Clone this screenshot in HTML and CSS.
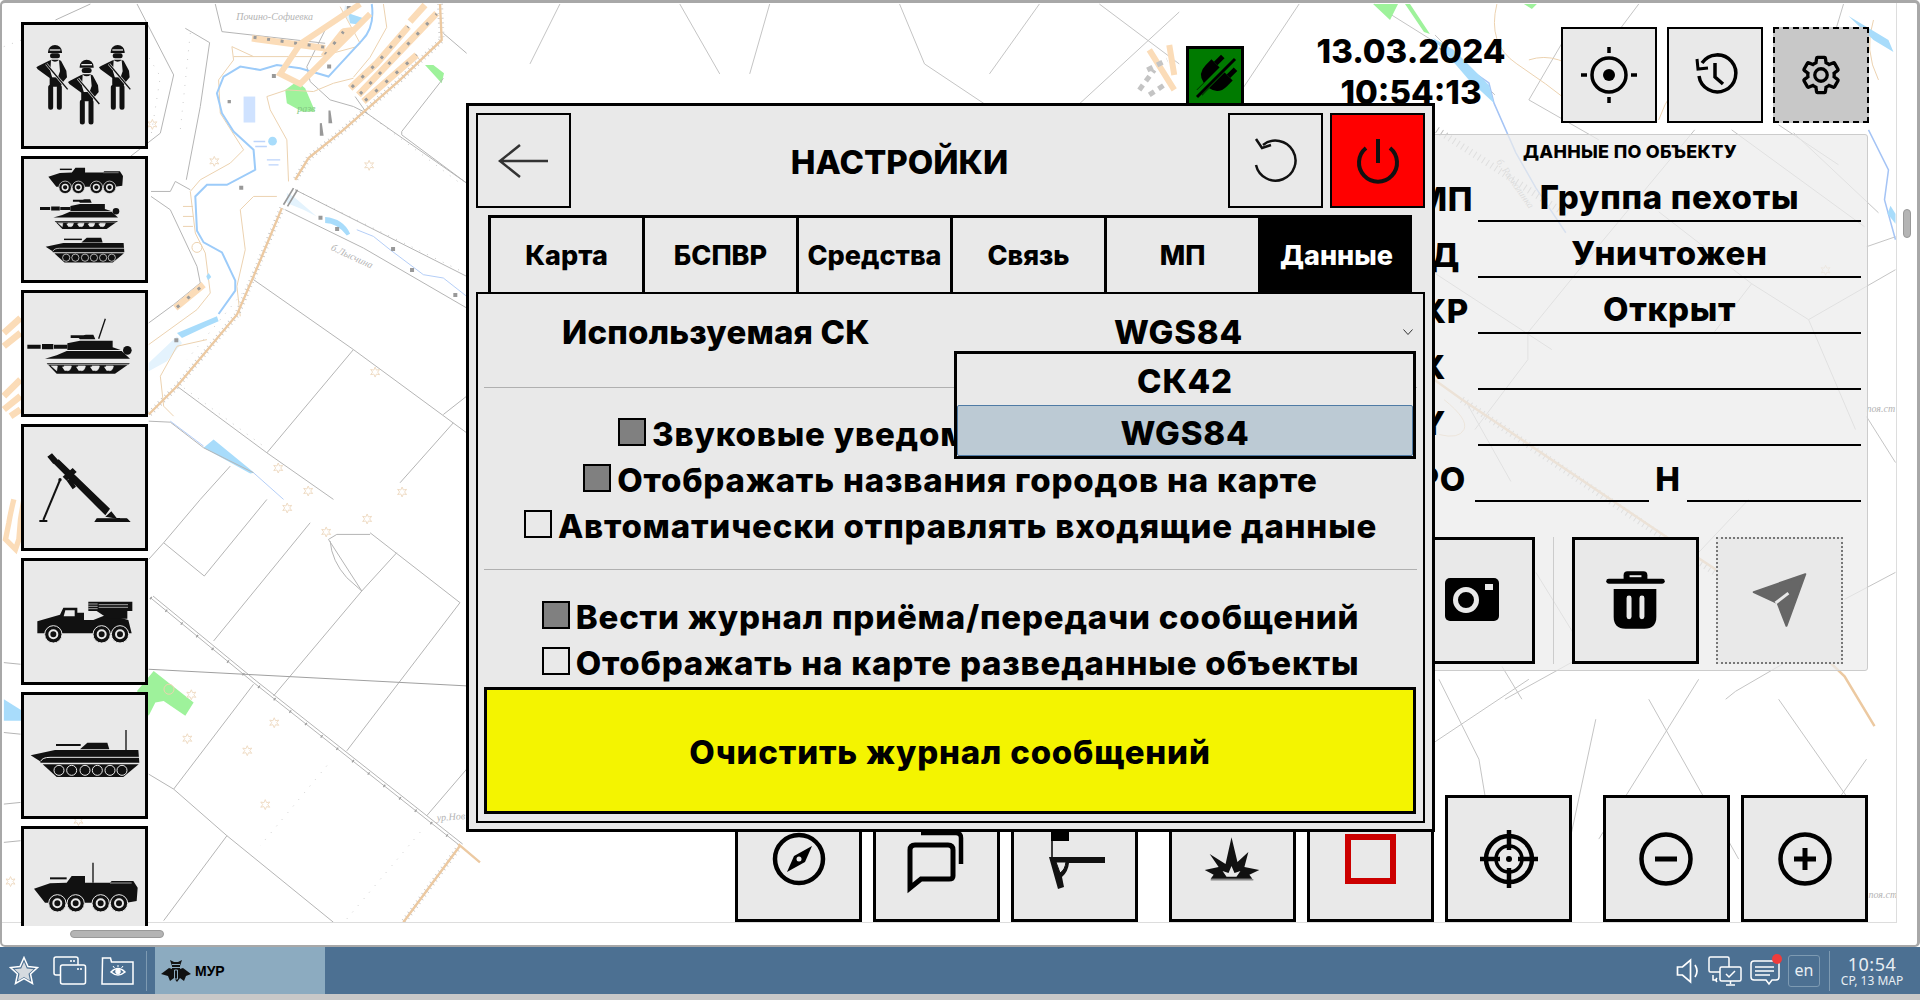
FILE: index.html
```html
<!doctype html>
<html lang="ru">

<head>
  <meta charset="UTF-8" />
  <title>МУР</title>
  <link rel="stylesheet" href="styles.css">
</head>

<body>
  <svg class="defs" width="0" height="0">
    <defs>
      <g id="soldier">
        <path d="M-21 20a21 21 0 0 1 42 0v3h-42z" fill="#111" />
        <path d="M-16 12h32v4h-32z" fill="#e9e9e9" />
        <rect x="-15" y="24" width="30" height="15" rx="7" fill="#111" />
        <path d="M-18 46l8-3h20l8 3 16 30 2 20-12 14-8 14h-32v-26l-36-26-4-6 6-4z" fill="#111" />
        <path d="M-12 44q12 10 24 0l3 34-7 20h-16l-6-20z" fill="#e9e9e9" />
        <path d="M-15 96h30v22h-30z" fill="#111" />
        <path d="M-26 56l64 76" stroke="#e9e9e9" stroke-width="8" />
        <path d="M-26 56l64 76" stroke="#111" stroke-width="4" />
        <path d="M-13 126v60M13 126v60" stroke="#111" stroke-width="15" stroke-linecap="round" />
      </g>
      <g id="tank">
        <path d="M82 1036h40v12h-40zM126 1034h34v16h-34zM162 1036h40v12h-40z" fill="#111" />
        <path d="M202 1032l38-8h98v20l24 8h-160z" fill="#111" />
        <path d="M212 1008h38l8-2h22l6 14h-46l-4-4h-24z" fill="#111" />
        <circle cx="382" cy="1053" r="13" fill="#111" />
        <path d="M135 1078l35-10 30-13h165l25 23z" fill="#111" />
        <path d="M140 1092h250l-45 31h-175z" fill="#111" />
        <path d="M144 1096h240M172 1100h-18l16 14zM214 1100h-22q2 14 11 14t11-14zM256 1100h-22q2 14 11 14t11-14zM298 1100h-22q2 14 11 14t11-14zM340 1100h-22q2 14 11 14t11-14z" fill="#e9e9e9" stroke="#e9e9e9" stroke-width="2" />
        <path d="M186 1102l8 12h4l8-12zM228 1102l8 12h4l8-12zM270 1102l8 12h4l8-12zM312 1102l8 12h4l8-12z" fill="#e9e9e9" />
      </g>
      <g id="bmp">
        <path d="M168 734h74v6h-74z" fill="#111" />
        <path d="M240 750l22-20h60l6 20z" fill="#111" />
        <path d="M92 768l73-16h250l3 38h-296l-3-5z" fill="#111" />
        <path d="M122 786q5-12 28-12h268" fill="none" stroke="#e9e9e9" stroke-width="3" />
        <path d="M128 795h288l-46 38h-200z" fill="#111" />
        <g fill="#111" stroke="#e9e9e9" stroke-width="3">
          <circle cx="177" cy="813" r="15" /><circle cx="215" cy="813" r="15" /><circle cx="255" cy="813" r="15" />
          <circle cx="292" cy="813" r="15" /><circle cx="330" cy="813" r="15" /><circle cx="366" cy="813" r="15" />
        </g>
      </g>
      <g id="btr">
        <path d="M150 1134h50v6h-50z" fill="#111" />
        <path d="M102 1168l48-16 50-2 15-20h40v20h75l5-5h65l13 20-3 40-30 5h-245z" fill="#111" />
        <path d="M330 1151h65" stroke="#e9e9e9" stroke-width="2" />
        <g fill="#111" stroke="#e9e9e9" stroke-width="3">
          <circle cx="172" cy="1212" r="26" /><circle cx="227" cy="1212" r="26" /><circle cx="302" cy="1212" r="26" /><circle cx="357" cy="1212" r="26" />
        </g>
        <g fill="none" stroke="#e9e9e9" stroke-width="6">
          <circle cx="172" cy="1212" r="12" /><circle cx="227" cy="1212" r="12" /><circle cx="302" cy="1212" r="12" /><circle cx="357" cy="1212" r="12" />
        </g>
      </g>
      <path id="star" d="M0-4.500l1.300 3 3.200-.6-2 2.600 2 2.600-3.200-.6-1.300 3-1.300-3-3.200.6 2-2.600-2-2.600 3.200.6z" fill="none" stroke="#efdcc5" />
    </defs>
  </svg>

  <div class="screen">
    <div class="workspace">
      <svg class="map" viewBox="0 0 1897 923" width="1897" height="923">
        <g transform="scale(.3333)" fill="none">
          <path fill="#9ef29b" stroke="none" d="M855 270l35-25 25 20 30 70h-40l-45-25zM1275 195h25l32 25-7 30z" />
          <path fill="#e4f3fd" stroke="none" d="M860 580l20 10 70 60-40-20-50-20zM1035 15l20 30 35 10-5 20-35-5-20-30zM445 1090l85-80 15 20-45 55-55 30z" />
          <path fill="#a8dcfb" stroke="none" d="M975 652q55 5 75 50l-10 5q-30-37-65-37zM610 1345l30-25 122 100-12 2zM530 1000l120-50 5 15-35 15-75 35zM1045 40l45 15-5 20-35-5z" />
          <g stroke="#b5b5b5" stroke-width="3">
            <path d="M270 12l-105 48M410 12l110 213-40 175-90 70M645 12l20 83 310 35M555 85l73 43-28 192-42 220" />
            <path d="M452 575h58l15-30 45 25M452 590l58 40 80 170 10 50-80 65-75 55M885 570l515 260M855 630l235 115 310 180" />
            <path d="M1100 340l300 210M1330 235l-125 160v10l195 145M760 840l300 210 340 250M1060 1050l-260 310" />
            <path d="M530 1160l270 200 200 140M1360 1270l-160 180M445 1265l65 3 100 77 150 75M1400 1190l-70 55M690 1400l-90 100" />
            <path d="M920 200l10 45 60 55 70 20 40 20-35-50M985 70l-65 130M1330 100l70 60" />
          </g>
          <g stroke="#8f8f8f" stroke-width="2" stroke-dasharray="2 24">
            <path d="M10 140l80-30M420 130l60 100-30 190M570 100l-30 290M760 840l-200 240M885 570l500 245M1100 340l280 210M530 1150l260 190" />
          </g>
          <g stroke="#ecd2b0" stroke-width="3">
            <path d="M695 140l5 40-45 60 5 100 70 110-40 40-90 50-30 35 15 125 30 60 15 120-40 50-145 105" />
            <path d="M800 290l60-20 80 5 60-25 60-15M800 290l10 40 50 90 5 125M830 590h-70l-40 40 15 120-25 110 10 90" />
            <path d="M1020 20l60 110-10 10-110 30-260 0M620 1020l-90 20-50 90 10 90 30 30M695 140l65 30M1150 12l10 70-50 90-50 60M548 620h30M548 650h30M548 680h30" />
          </g>
          <g stroke="#fbdcb8" stroke-width="20" stroke-linejoin="bevel">
            <path d="M755 115l220 30M970 170l60-75 35-5M1050 265l80-75 95-110M1075 285l235-245M1090 305l160-140M1230 65l45-50M525 925l85-70M10 1000l50-45M10 1040l50-40M10 1190l50-50M10 1230l50-40M30 1250l30-20" />
          </g>
          <g stroke="#9a9a9a" stroke-width="9" stroke-dasharray="9 32">
            <path d="M760 112l215 30M975 165l55-70M1055 262l75-72 95-110M1080 282l230-240M1095 302l155-137M530 923l80-68" />
          </g>
          <path d="M1320 12l5 108-125 120-170 150-105 85-40 65" stroke="#bdbdbd" stroke-width="18" stroke-dasharray="2 12" />
          <path d="M845 625l-85 205-50 115-180 215-85 85" stroke="#bdbdbd" stroke-width="18" stroke-dasharray="2 12" />
          <path d="M1320 12l5 108-125 120-170 150-105 85-40 65M845 625l-85 205-50 115-180 215-85 85" stroke="#ecc9a1" stroke-width="7" />
          <path d="M850 615l30-50M862 620l30-50" stroke="#999" stroke-width="5" />
          <path d="M1115 12q10 70-30 110l-100 108-85-25-70-10-50 15-60-10-50 30-20 50 15 60 35 55 60 55 5 60-85 45h-60l-35 35 5 103 20 35 55 30 40 85v30l-50 70" stroke="#9ccbf9" stroke-width="6" />
          <path d="M1070 690l50 20 50 40 100 75 60 10 70 55M510 1265l100 75M760 1420l90 80" stroke="#a5c4f5" stroke-width="2.500" />
          <path d="M730 290h35v78h-35z" fill="#cfe2ff" />
          <circle cx="817" cy="424" r="13" fill="#a8dcfb" />
          <path d="M800 480h40M805 495h30M760 425h35M765 440h35" stroke="#bcd4fb" stroke-width="4" />
          <circle cx="590" cy="743" r="15" stroke="#ecd2b0" stroke-width="3" />
          <path d="M625 820l8 12-10 10-5-12z" fill="#a8dcfb" />
          <path fill="#999" d="M815 222h12v12h-12zM981 194h12v12h-12zM717 558h12v12h-12zM522 1016h12v12h-12zM955 648h12v12h-12zM1005 682h12v12h-12zM1173 742h12v12h-12zM1230 805h12v12h-12zM1360 880h12v12h-12zM1040 18h12v12h-12zM682 300h10v10h-10z" />
          <path fill="#999" d="M962 370l5 35h-5zM988 332l5 35h-5z" stroke="#999" stroke-width="6" />
        </g>
        <g transform="translate(0 500) scale(.3333)" fill="none">
          <path fill="#9ef29b" stroke="none" d="M410 575l50-60 120 95-25 40-65-45-25 5-20 40z" />
          <path fill="#a8dcfb" stroke="none" d="M10 600l55 35v30h-55z" />
          <g stroke="#b5b5b5" stroke-width="3">
            <path d="M600 0L490 130l122 100L800 0M930 70L640 425M985 120l100 155 105-115M1110 100l270 210-340 445M1085 275L820 590M760 555L520 870" />
            <path d="M1400 810L1280 950M445 825l75 45 160 140 320 260M680 1010L490 1265M985 120l25-15h100M990 125q5 60 50 110l45 40M445 180l45-50M10 490l50 5M10 700l50 5M10 915l50-5M10 1030l50-5" />
          </g>
          <path d="M450 295l310 255 620 490M458 290l310 255 620 490" stroke="#b5b5b5" stroke-width="3" />
          <path d="M450 295l310 255 620 490" stroke="#a0a0a0" stroke-width="9" stroke-dasharray="4 56" />
          <path d="M445 510l955 50" stroke="#a0a0a0" stroke-width="3" />
          <path d="M980 800L780 1040M1260 1000l-220 260" stroke="#8f8f8f" stroke-width="2" stroke-dasharray="2 24" />
          <path d="M1380 1040l-170 230" stroke="#bdbdbd" stroke-width="18" stroke-dasharray="2 12" />
          <path d="M1380 1040l-170 230M1375 1035l65 55" stroke="#ecc9a1" stroke-width="7" />
          <path d="M40 0q-10 40-15 70l-10 50 30 30 10-30 5-60 10-60" stroke="#fbdcb8" stroke-width="16" />
          <circle cx="506" cy="570" r="15" stroke="#ecd2b0" stroke-width="3" />
        </g>
        <g fill="none" stroke="#c4c4c4">
          <path d="M560 4l-30 60M680 4l40 70M770 4l-20 70M900 4l25 60 60 40M1040 4l-50 70M1100 4l80 60M1180 12l-100 92M1300 4l-60 90" />
          <path d="M1436 35l60 60M1375 4l80 50M1600 140l-70-40 35-60M1640 4l-60 80 40 30M1780 125l60 40M1845 4l-30 100" />
          <path d="M1696 130l-97 117-70 86v27l-53 70M1733 130l133 97M1660 212l93 72 57 36 47 110M1753 284l-37 48M1810 320l87-50M1435 273l118 77" />
          <path d="M1795 133l85 80M1868 247l29-10M1467 402l45 80M1537 573l37 60M1868 417l29 46M1750 500l-50 53M1846 600l51-27M1503 667l20 33M1573 663l-67 37M1787 663l-50 29-10 8" />
          <path d="M1530 680l-150 100M1440 680l40 80 10 60M1700 680l-100 160M1868 760l-70 100M1780 700l70 100M1597 720l-30 140M1650 700l90 160" />
        </g>
        <g fill="none">
          <path d="M1438 130l130 85M1463 400l200 137 104 70 50 40" stroke="#bdbdbd" stroke-width="7" stroke-dasharray="1 4" />
          <path d="M1435 380l28 20 204 137 106 70 73 70 30 50" stroke="#ecc9a1" stroke-width="2.500" />
          <path d="M1440 48l50 35 5 20 22 50 20 35 30 45" stroke="#a5c4f5" stroke-width="1.500" />
          <path d="M1870 130l20 40-4 30 11 40" stroke="#a5c4f5" stroke-width="1.500" />
          <path d="M1498 4q-10 40 20 60t55 40M1530 60q30-10 60 20M1700 60q-30 30-40 60M1780 80q20-10 40 0M1875 20q-10 30 5 60" stroke="#ecd2b0" />
          <path d="M1445 400q25 20 20 30t-25 5" stroke="#ecd2b0" />
          <path d="M1434 38l21 12 35 35 5 18-25-23zM1850 16l20 12 20 12 5 12-20-12z" fill="#a8dcfb" />
          <path d="M1374 4h25l-8 16zM1406 4h5l20 30-6-2z" fill="#9ef29b" />
          <path d="M1525 4h13l-5 5z" fill="#9ef29b" />
          <path d="M1892 206l5 8v10l-8-10z" fill="#a8dcfb" />
          <path d="M360 4l-60 40-20 30 20 10 40-40 30-30M1150 50l25 40M1170 45l5 30" stroke="#fbdcb8" stroke-width="6" />
          <path d="M1148 70l20-10M1150 95l18-12M1140 90l15-20" stroke="#c4c4c4" stroke-width="5" stroke-dasharray="6 5" />
        </g>
        <g>
          <use href="#star" x="152" y="124" /><use href="#star" x="214" y="161" /><use href="#star" x="369" y="165" />
          <use href="#star" x="375" y="372" /><use href="#star" x="278" y="468" /><use href="#star" x="308" y="491" />
          <use href="#star" x="402" y="492" /><use href="#star" x="287" y="508" /><use href="#star" x="367" y="519" />
          <use href="#star" x="326" y="532" /><use href="#star" x="191" y="695" /><use href="#star" x="187" y="739" />
          <use href="#star" x="274" y="723" /><use href="#star" x="247" y="751" /><use href="#star" x="265" y="805" />
          <use href="#star" x="10" y="882" /><use href="#star" x="78" y="821" /><use href="#star" x="1827" y="270" />
        </g>
        <g class="map-label">
          <text x="236" y="20">Почино-Софиевка</text>
          <text x="330" y="250" transform="rotate(25 330 250)">б.Лысчина</text>
          <text x="297" y="112" class="map-label-green">разв</text>
          <text x="437" y="822" transform="rotate(-4 437 822)">ур.Нов</text>
          <text x="1497" y="162" transform="rotate(55 1497 162)">б. Расколинка</text>
          <text x="1868" y="412">поя.ст</text>
          <text x="1870" y="899">поя.ст</text>
        </g>
      </svg>

      <div class="tool-column">
        <button class="tile">
          <svg viewBox="72 77 363 363"><use href="#soldier" x="165" y="138" /><use href="#soldier" x="260" y="182" /><use href="#soldier" x="353" y="138" /></svg>
        </button>
        <button class="tile">
          <svg viewBox="72 479 363 363">
            <use href="#btr" transform="translate(71.600 -308.600) scale(.72)" />
            <use href="#tank" transform="translate(57.700 -164.600) scale(.76)" />
            <use href="#bmp" transform="translate(70.400 186.500) scale(.724)" />
          </svg>
        </button>
        <button class="tile">
          <svg viewBox="72 881 363 363">
            <use href="#tank" />
            <path d="M296 1018l20-60" stroke="#111" stroke-width="4" />
          </svg>
        </button>
        <button class="tile">
          <svg viewBox="72 83 363 363">
            <path d="M142 172l14-10 18 20-14 12zM160 192l16-12 154 148-14 20z" fill="#111" />
            <path d="M188 232l30-26 12 12-30 26zM200 244l18 26 10-8-16-26z" fill="#111" />
            <path d="M180 242l-50 120" stroke="#111" stroke-width="6" />
            <circle cx="180" cy="241" r="5" fill="#111" />
            <path d="M118 362h24v6h-24zM316 352l18-16 16 20h10v2h-68l-8 10h106l-7-10h-31z" fill="#111" />
            <path d="M290 357h90l12 11h-109z" fill="#111" />
          </svg>
        </button>
        <button class="tile">
          <svg viewBox="72 185 363 363">
            <path d="M112 366l68-20 10-21h42v15h20v22h28l30-12h30l45 12 10 40h-283z" fill="#111" />
            <path d="M196 333h28v18h-33z" fill="#e9e9e9" />
            <path d="M265 307h132v28h-132zM290 335h92v23h-57z" fill="#111" />
            <path d="M265 314h28M265 321h28M265 328h28M296 316h88M296 324h88" stroke="#e9e9e9" stroke-width="2" />
            <g fill="#111" stroke="#e9e9e9" stroke-width="3">
              <circle cx="160" cy="405" r="26" /><circle cx="305" cy="405" r="26" /><circle cx="360" cy="405" r="26" />
            </g>
            <g fill="none" stroke="#e9e9e9" stroke-width="6">
              <circle cx="160" cy="405" r="12" /><circle cx="305" cy="405" r="12" /><circle cx="360" cy="405" r="12" />
            </g>
          </svg>
        </button>
        <button class="tile">
          <svg viewBox="72 587 363 363">
            <use href="#bmp" />
            <path d="M378 692v60" stroke="#111" stroke-width="4" />
          </svg>
        </button>
        <button class="tile">
          <svg viewBox="72 989 363 363">
            <use href="#btr" />
            <path d="M279 1090v60" stroke="#111" stroke-width="4" />
          </svg>
        </button>
      </div>

      <div class="link-status">
        <svg viewBox="0 0 52 52" width="52" height="52">
          <g transform="rotate(45 26 26)">
            <path d="M17 6v10M35 6v10" stroke="#000" stroke-width="5" />
            <path d="M11 16h30v8q0 12-11 14v10h-8v-10q-11-2-11-14z" fill="#000" />
          </g>
          <path d="M46 6L6 46" stroke="#007a00" stroke-width="7" />
          <path d="M46 8L8 46" stroke="#000" stroke-width="3" />
        </svg>
      </div>

      <div class="clock">
        <span>13.03.2024</span>
        <span>10:54:13</span>
      </div>

      <div class="top-actions">
        <button class="action">
          <svg viewBox="0 0 92 92" width="92" height="92" fill="none" stroke="#000">
            <circle cx="46" cy="46" r="17" stroke-width="3.500" />
            <circle cx="46" cy="46" r="6" fill="#000" stroke="none" />
            <path d="M46 24v-6M46 68v6M24 46h-6M68 46h6" stroke-width="3.500" />
          </svg>
        </button>
        <button class="action">
          <svg viewBox="0 0 92 92" width="92" height="92" fill="none" stroke="#000" stroke-width="3.500">
            <path d="M33 34a18.500 18.500 0 1 1-3 13" />
            <path d="M28 30l1 10 10-1" stroke-width="3" />
            <path d="M46 34v14l8 7" />
          </svg>
        </button>
        <button class="action action-dashed">
          <svg viewBox="0 0 24 24" width="44" height="44" fill="none" stroke="#000" stroke-width="1.800">
            <path d="M19.140 12.940c.04-.3.06-.61.06-.94 0-.32-.02-.64-.07-.94l2.030-1.580c.18-.14.23-.41.12-.61l-1.920-3.320c-.12-.22-.37-.29-.59-.22l-2.390.96c-.5-.38-1.030-.7-1.620-.94l-.36-2.540c-.04-.24-.24-.41-.48-.41h-3.840c-.24 0-.43.17-.47.41l-.36 2.540c-.59.24-1.130.57-1.620.94l-2.390-.96c-.22-.08-.47 0-.59.22L2.740 8.870c-.12.21-.08.47.12.61l2.030 1.580c-.05.3-.09.63-.09.94s.02.64.07.94l-2.030 1.580c-.18.14-.23.41-.12.61l1.920 3.320c.12.22.37.29.59.22l2.390-.96c.5.38 1.030.7 1.620.94l.36 2.540c.05.24.24.41.48.41h3.840c.24 0 .44-.17.47-.41l.36-2.540c.59-.24 1.130-.56 1.620-.94l2.390.96c.22.08.47 0 .59-.22l1.920-3.320c.12-.22.07-.47-.12-.61l-2.010-1.580z" />
            <circle cx="12" cy="12" r="3.400" />
          </svg>
        </button>
      </div>

      <div class="object-panel">
        <div class="object-title">ДАННЫЕ ПО ОБЪЕКТУ</div>
        <div class="object-row"><span class="object-label pad-10">ТМП</span><span class="object-value">Группа пехоты</span></div>
        <div class="object-row"><span class="object-label pad-19">НД</span><span class="object-value">Уничтожен</span></div>
        <div class="object-row"><span class="object-label pad-10">СКР</span><span class="object-value">Открыт</span></div>
        <div class="object-row"><span class="object-label pad-33">Х</span><span class="object-value"></span></div>
        <div class="object-row"><span class="object-label pad-33">Y</span><span class="object-value"></span></div>
        <div class="object-row object-row-split">
          <span class="object-label pad-10">РО</span><span class="object-value"></span>
          <span class="object-label-h">Н</span><span class="object-value"></span>
        </div>
        <div class="object-actions">
          <button class="tile">
            <svg viewBox="1411 540 121 121">
              <rect x="1445" y="578" width="54" height="43" rx="5" fill="#000" />
              <circle cx="1466" cy="600" r="10.500" fill="#000" stroke="#e9e9e9" stroke-width="5" />
              <path d="M1485 584h8v6h-8z" fill="#e9e9e9" />
            </svg>
          </button>
          <div class="object-divider"></div>
          <button class="tile">
            <svg viewBox="1576 540 122 121">
              <path d="M1610 581h54" stroke="#000" stroke-width="5" stroke-linecap="round" />
              <path d="M1625 579v-4q0-4 4-4h16q4 0 4 4v4z" fill="#000" />
              <path d="M1631 576h12" stroke="#e9e9e9" stroke-width="2" />
              <path d="M1615 589h43v28q0 12-12 12h-19q-12 0-12-12z" fill="#000" />
              <path d="M1630.500 598v19M1643.500 598v19" stroke="#e9e9e9" stroke-width="5" stroke-linecap="round" />
            </svg>
          </button>
          <button class="tile tile-dotted">
            <svg viewBox="1720 540 124 121">
              <path d="M1808 574l-52 18 24 11 9 23z" fill="#666" stroke="#666" stroke-width="2" stroke-linejoin="round" />
              <path d="M1778 603l13-10" stroke="#e9e9e9" stroke-width="3" />
            </svg>
          </button>
        </div>
      </div>

      <div class="bottom-actions">
        <button class="tile">
          <svg viewBox="738 798 121 121">
            <circle cx="799" cy="859" r="24" fill="none" stroke="#000" stroke-width="4.500" />
            <path d="M812 846l-18 10-7 16 18-10z" fill="#000" />
            <circle cx="799" cy="859" r="2.500" fill="#e9e9e9" />
          </svg>
        </button>
        <button class="tile">
          <svg viewBox="876 798 121 121" fill="none" stroke="#000">
            <path d="M921 833h35q5 0 5 5v26" stroke-width="4.500" />
            <path d="M910 888v-38q0-5 5-5h33q5 0 5 5v26q0 3-4 3h-28z" stroke-width="5" />
          </svg>
        </button>
        <button class="tile">
          <svg viewBox="1014 798 121 121">
            <path d="M1051 832h18v9h-18z" fill="#000" />
            <path d="M1052 840v20" stroke="#000" stroke-width="1.500" />
            <path d="M1049 857h56v6h-36q-1 9-7 14l2 10-6 2z" fill="#111" />
            <path d="M1056 862h10q-1 8-6 11z" fill="#e9e9e9" stroke="#111" />
          </svg>
        </button>
        <button class="tile tile-gap">
          <svg viewBox="1172 798 122 121">
            <path d="M1232 837l6 25 11-10-4 15 15 3-10 5 3 4h-42l3-4-9-5 14-3-9-13 16 10z" fill="#111" />
            <path d="M1232 866l3 7 6-2-4 6h-10l-4-6 6 2z" fill="#e9e9e9" />
            <path d="M1211 880h43" stroke="#888" stroke-width="1.500" />
          </svg>
        </button>
        <button class="tile">
          <svg viewBox="1310 798 121 121">
            <rect x="1348" y="837" width="45" height="44" fill="none" stroke="#c00" stroke-width="6" />
          </svg>
        </button>
        <button class="tile">
          <svg viewBox="1448 798 121 121" fill="none" stroke="#000">
            <circle cx="1509" cy="859" r="23" stroke-width="4.500" />
            <circle cx="1509" cy="859" r="13" stroke-width="3.500" />
            <circle cx="1509" cy="859" r="3" fill="#000" stroke="none" />
            <path d="M1509 830v20M1509 868v20M1480 859h20M1518 859h20" stroke-width="4.500" />
          </svg>
        </button>
        <button class="tile tile-gap">
          <svg viewBox="1606 798 121 121" fill="none" stroke="#000">
            <circle cx="1666" cy="859" r="24.500" stroke-width="4.500" />
            <path d="M1655 859h22" stroke-width="5" />
          </svg>
        </button>
        <button class="tile">
          <svg viewBox="1744 798 121 121" fill="none" stroke="#000">
            <circle cx="1805" cy="859" r="24.500" stroke-width="4.500" />
            <path d="M1794 859h22M1805 848v22" stroke-width="5" />
          </svg>
        </button>
      </div>

      <div class="settings-dialog">
        <div class="dialog-header">
          <button class="dialog-btn">
            <svg viewBox="0 0 91 91" width="91" height="91" fill="none" stroke="#333" stroke-width="2.500">
              <path d="M70 46H23M42 30L22 46l20 16" />
            </svg>
          </button>
          <h2 class="dialog-title">НАСТРОЙКИ</h2>
          <button class="dialog-btn">
            <svg viewBox="0 0 91 91" width="91" height="91" fill="none" stroke="#111" stroke-width="2.500">
              <path d="M33 30a20 20 0 1 1-7 20" />
              <path d="M26 24l6 9 9-3" />
            </svg>
          </button>
          <button class="dialog-btn dialog-btn-power">
            <svg viewBox="0 0 91 91" width="91" height="91" fill="none" stroke="#111" stroke-width="4">
              <path d="M46 24v24M34 33a19 19 0 1 0 24 0" />
            </svg>
          </button>
        </div>

        <div class="tabs">
          <div class="tab">Карта</div>
          <div class="tab">БСПВР</div>
          <div class="tab">Средства</div>
          <div class="tab">Связь</div>
          <div class="tab">МП</div>
          <div class="tab tab-active">Данные</div>
        </div>

        <div class="tab-panel">
          <div class="combo-row">
            <span class="combo-label">Используемая СК</span>
            <span class="combo-value">WGS84</span>
            <svg class="combo-arrow" viewBox="0 0 10 6" width="10" height="6"><path d="M.5.5L5 5.500 9.500.5" fill="none" stroke="#333" /></svg>
          </div>
          <div class="dropdown">
            <div class="dropdown-item">СК42</div>
            <div class="dropdown-item dropdown-item-selected">WGS84</div>
          </div>

          <div class="divider"></div>
          <div class="check-group check-group-first">
            <label class="check-row"><span class="check check-on"></span>Звуковые уведомления о событиях</label>
            <label class="check-row"><span class="check check-on"></span>Отображать названия городов на карте</label>
            <label class="check-row"><span class="check"></span>Автоматически отправлять входящие данные</label>
          </div>
          <div class="divider divider-second"></div>
          <div class="check-group check-group-second">
            <label class="check-row"><span class="check check-on"></span>Вести журнал приёма/передачи сообщений</label>
            <label class="check-row"><span class="check"></span>Отображать на карте разведанные объекты</label>
          </div>
          <button class="clear-btn">Очистить журнал сообщений</button>
        </div>
      </div>

      <div class="scroll-h"></div>
      <div class="scroll-v"></div>
      <div class="frame"></div>
    </div>

    <div class="taskbar">
      <div class="task-launchers">
        <svg viewBox="0 0 30 30" width="30" height="30">
          <path d="M15 1.500l4 9 9.500 1-7 6.500 2 9.500-8.500-5-8.500 5 2-9.500-7-6.500 9.500-1z" fill="none" stroke="#fff" stroke-width="1.500" />
          <path d="M15 6l2.800 6.500 6.700.7-5 4.600 1.400 6.700-5.900-3.500-5.900 3.500 1.400-6.700-5-4.600 6.700-.7z" fill="#d6dbe0" />
        </svg>
        <svg viewBox="0 0 34 30" width="34" height="30" fill="#4c7092" stroke="#fff" stroke-width="1.500">
          <rect x="1" y="1" width="24" height="18" rx="2" />
          <rect x="7.500" y="9" width="25" height="19" rx="2" />
          <path d="M17 5h5M24 13h6" stroke-dasharray="2 1" />
        </svg>
        <svg viewBox="0 0 34 30" width="34" height="30" fill="none" stroke="#fff" stroke-width="1.500">
          <path d="M1.500 4V2h8l1 4h21.500v22h-31z" />
          <path d="M10 16q7-7 14 0-7 6-14 0z" />
          <circle cx="17" cy="15.500" r="2" fill="#fff" />
          <path d="M12 10l1.500 2M17 9v2M22 10l-1.500 2" stroke-width="1" />
        </svg>
        <span class="task-sep"></span>
      </div>
      <div class="task-active">
        <svg viewBox="0 0 32 26" width="32" height="26">
          <path d="M1 16l8-6 3 1v-3l-2-6 4 2h4l4-2-2 6v3l3-1 8 6-5 2-2 5-4-3-3 4-3-4-4 3-2-5z" fill="#111" />
          <path d="M12 6.500h8M12 9.500h8M14.500 12h3v9h-3z" stroke="#8cabc0" stroke-width="1" fill="none" />
        </svg>
        <span>МУР</span>
      </div>
      <div class="tray">
        <svg viewBox="0 0 24 26" width="24" height="26" fill="none" stroke="#fff" stroke-width="1.700">
          <path d="M1.500 9v8h5l8 7V2l-8 7zM19 7q4 6 0 12" />
        </svg>
        <svg viewBox="0 0 34 30" width="34" height="30" fill="none" stroke="#fff" stroke-width="1.500">
          <rect x="1" y="1" width="20" height="15" rx="1.500" />
          <path d="M5 19v5h4M9 22l-1.500 2 1.500 2" />
          <rect x="12" y="11" width="21" height="14" rx="1.500" fill="#4c7092" />
          <path d="M18 18l3 3 6-6M22.500 25v3M18 29h9" />
        </svg>
        <span class="tray-chat">
          <svg viewBox="0 0 30 30" width="30" height="30" fill="none" stroke="#fff" stroke-width="1.500">
            <path d="M4 5h22q3 0 3 3v13q0 3-3 3h-4l-3 4-3-4H4q-3 0-3-3V8q0-3 3-3z" />
            <path d="M5 11h19M5 15h19M5 19h15" />
          </svg>
          <i class="tray-dot"></i>
        </span>
        <span class="tray-lang">en</span>
        <span class="tray-sep"></span>
        <div class="tray-clock">
          <span class="tray-time">10:54</span>
          <span class="tray-date">СР, 13 МАР</span>
        </div>
      </div>
    </div>
    <div class="screen-foot"></div>
  </div>
</body>

</html>
```

FILE: styles.css
```css
* {
  box-sizing: border-box;
}

html,
body {
  margin: 0;
  height: 100%;
  overflow: hidden;
}

body {
  font-family: 'Inter', 'Noto Sans', sans-serif;
  font-weight: 800;
  color: #000;
  background-color: #c8c8c8;
}

button {
  font: inherit;
  color: inherit;
  letter-spacing: inherit;
  padding: 0;
  cursor: pointer;
}

.defs {
  display: block;
  height: 0;
}

.screen {
  width: 1920px;
  height: 1000px;
  display: flex;
  flex-direction: column;
}

.workspace {
  position: relative;
  height: 947px;
  flex: none;
  background-color: #fff;
  overflow: hidden;
}

.map {
  position: absolute;
  left: 0;
  top: 0;
  display: block;
  border-bottom: 1px solid #ddd;
  border-right: 1px solid #ddd;
}

.map-label {
  font-family: 'Liberation Serif', serif;
  font-style: italic;
  font-weight: 400;
  font-size: 10px;
  fill: #b4b4b4;
}

.map-label-green {
  fill: #84c884;
}

.frame {
  position: absolute;
  inset: 0;
  border: solid #a8a8a8;
  border-width: 3px 3px 2px 2px;
  border-radius: 5px;
  pointer-events: none;
}

/* shared square button */
.tile {
  flex: none;
  width: 127px;
  height: 127px;
  border: 3px solid #000;
  background-color: #e9e9e9;
  display: flex;
  align-items: center;
  justify-content: center;
}

.tile svg {
  display: block;
  width: 100%;
  height: 100%;
}

.tile-dotted {
  border: 2px dotted #777;
}

.tile-gap {
  margin-left: 20px;
}

.tool-column {
  position: absolute;
  left: 21px;
  top: 22px;
  height: 904px;
  display: flex;
  flex-direction: column;
  gap: 7px;
  overflow: hidden;
}

.link-status {
  position: absolute;
  left: 1186px;
  top: 46px;
  width: 58px;
  height: 60px;
  padding: 2px 0 0 0;
  border: 3px solid #000;
  background-color: #007a00;
}

.link-status svg {
  display: block;
}

.clock {
  position: absolute;
  left: 1290px;
  top: 31px;
  width: 242px;
  display: flex;
  flex-direction: column;
  align-items: center;
  font-size: 33px;
  line-height: 41px;
}

.top-actions {
  position: absolute;
  left: 1561px;
  top: 27px;
  display: flex;
  gap: 10px;
}

.action {
  width: 96px;
  height: 96px;
  border: 2px solid #000;
  background-color: #e9e9e9;
  display: flex;
  align-items: center;
  justify-content: center;
}

.action-dashed {
  border-style: dashed;
  background-color: #c8c8c8;
}

.object-panel {
  position: absolute;
  left: 1392px;
  top: 134px;
  width: 476px;
  height: 537px;
  border: 1px solid #ccc;
  border-radius: 3px;
  background-color: rgba(236, 236, 236, .72);
}

.object-title {
  height: 31px;
  text-align: center;
  font-size: 18px;
  letter-spacing: .3px;
  line-height: 33px;
}

.object-row {
  height: 56px;
  padding-right: 6px;
  display: flex;
  font-size: 33px;
  letter-spacing: .7px;
}

.object-label {
  width: 85px;
  flex: none;
  text-align: right;
  line-height: 66px;
}

.pad-10 {
  padding-right: 9px;
}

.pad-19 {
  padding-right: 18px;
}

.pad-33 {
  padding-right: 32px;
}

.object-value {
  flex: 1;
  border-bottom: 2px solid #000;
  text-align: center;
  line-height: 62px;
  white-space: nowrap;
}

.object-row-split .object-label {
  width: 82px;
}

.object-label-h {
  width: 38px;
  flex: none;
  text-align: center;
  line-height: 66px;
}

.object-actions {
  margin-top: 35px;
  padding-left: 15px;
  display: flex;
}

.object-divider {
  width: 1px;
  height: 127px;
  margin: 0 18px;
  background-color: #ccc;
}

.object-actions .tile-dotted {
  margin-left: 17px;
}

.bottom-actions {
  position: absolute;
  left: 735px;
  top: 795px;
  display: flex;
  gap: 11px;
}

/* dialog */
.settings-dialog {
  position: absolute;
  left: 466px;
  top: 103px;
  width: 969px;
  height: 729px;
  padding: 7px 7px 0;
  border: 3px solid #000;
  background-color: #e9e9e9;
}

.dialog-header {
  display: flex;
  align-items: stretch;
  gap: 7px;
  height: 95px;
}

.dialog-btn {
  width: 95px;
  flex: none;
  border: 2px solid #000;
  background-color: #e9e9e9;
  display: flex;
  align-items: center;
  justify-content: center;
}

.dialog-btn svg {
  display: block;
}

.dialog-btn-power {
  background-color: #f00;
}

.dialog-title {
  flex: 1;
  margin: 0;
  text-align: center;
  font-size: 33px;
  line-height: 98px;
  font-weight: 800;
}

.tabs {
  display: flex;
  margin: 7px 0 0 12px;
}

.tab {
  width: 154px;
  height: 77px;
  border: solid #000;
  border-width: 3px 0 0 3px;
  text-align: center;
  font-size: 27px;
  line-height: 76px;
  white-space: nowrap;
}

.tab-active {
  background-color: #000;
  color: #fff;
}

.tab-panel {
  position: relative;
  height: 531px;
  padding: 0 6px;
  border: 2px solid #000;
  letter-spacing: .8px;
}

.combo-row {
  display: flex;
  align-items: center;
  height: 74px;
  padding-top: 2px;
  font-size: 33px;
}

.combo-label {
  margin-left: 78px;
  width: 552px;
  letter-spacing: .2px;
  white-space: nowrap;
}

.combo-value {
  width: 150px;
}

.combo-arrow {
  margin-left: 139px;
}

.dropdown {
  position: absolute;
  left: 476px;
  top: 57px;
  width: 462px;
  height: 108px;
  border: 3px solid #000;
  background-color: #e9e9e9;
  z-index: 2;
}

.dropdown-item {
  height: 51px;
  text-align: center;
  font-size: 33px;
  line-height: 54px;
}

.dropdown-item-selected {
  border: 1px solid #4f7ba5;
  border-radius: 2px;
  background-color: #bccad4;
}

.divider {
  height: 1px;
  margin-top: 19px;
  background-color: #b0b0b0;
}

.divider-second {
  margin-top: 22px;
}

.check-group {
  display: flex;
  flex-direction: column;
  align-items: center;
}

.check-group-first {
  margin-top: 21px;
}

.check-group-second {
  margin-top: 22px;
}

.check-row {
  height: 46px;
  padding-top: 3px;
  display: flex;
  align-items: center;
  gap: 6px;
  font-size: 33px;
  white-space: nowrap;
}

.check {
  width: 28px;
  height: 28px;
  margin-top: -3px;
  flex: none;
  border: 2px solid #000;
}

.check-on {
  background-color: #808080;
}

.clear-btn {
  display: block;
  width: 932px;
  height: 127px;
  margin-top: 3px;
  padding-top: 2px;
  border: 3px solid #000;
  background-color: #f4f400;
  font-size: 33px;
}

.scroll-h {
  position: absolute;
  left: 70px;
  top: 930px;
  width: 94px;
  height: 8px;
  border: 1px solid #999;
  border-radius: 4px;
  background-color: #b4b4b4;
}

.scroll-v {
  position: absolute;
  left: 1903px;
  top: 209px;
  width: 8px;
  height: 29px;
  border: 1px solid #999;
  border-radius: 4px;
  background-color: #b4b4b4;
}

/* taskbar */
.taskbar {
  height: 47px;
  flex: none;
  display: flex;
  align-items: stretch;
  background-color: #4c7092;
  color: #fff;
  font-family: 'Noto Sans', sans-serif;
  font-weight: 400;
}

.task-launchers {
  width: 155px;
  flex: none;
  padding-left: 9px;
  display: flex;
  align-items: center;
  gap: 14px;
}

.task-sep {
  width: 1px;
  height: 40px;
  margin-left: -3px;
  background-color: #7d9ab2;
}

.task-active {
  width: 170px;
  flex: none;
  padding-left: 5px;
  display: flex;
  align-items: center;
  gap: 3px;
  background-color: #8cabc0;
  color: #000;
  font-family: 'Liberation Sans', sans-serif;
  font-size: 14px;
  font-weight: 700;
}

.tray {
  flex: 1;
  padding-right: 15px;
  display: flex;
  align-items: center;
  justify-content: flex-end;
}

.tray > svg,
.tray-chat {
  margin-right: 8px;
}

.tray-chat {
  position: relative;
  display: block;
  height: 30px;
}

.tray-chat svg {
  display: block;
}

.tray-dot {
  position: absolute;
  right: -2px;
  top: -2px;
  width: 10px;
  height: 10px;
  border-radius: 50%;
  background-color: #ee3c3c;
}

.tray-lang {
  width: 32px;
  height: 32px;
  border: 1px solid #7d9ab2;
  border-radius: 3px;
  text-align: center;
  font-size: 16px;
  line-height: 28px;
  color: #e8eef3;
}

.tray-sep {
  width: 1px;
  height: 40px;
  margin: 0 9px;
  background-color: #7d9ab2;
}

.tray-clock {
  width: 66px;
  display: flex;
  flex-direction: column;
  align-items: center;
  color: #e8eef3;
}

.tray-time {
  font-size: 18px;
  line-height: 20px;
  letter-spacing: .5px;
}

.tray-date {
  font-size: 12px;
  line-height: 14px;
  white-space: nowrap;
}

.screen-foot {
  flex: 1;
  background-color: #c8c8c8;
}
```
